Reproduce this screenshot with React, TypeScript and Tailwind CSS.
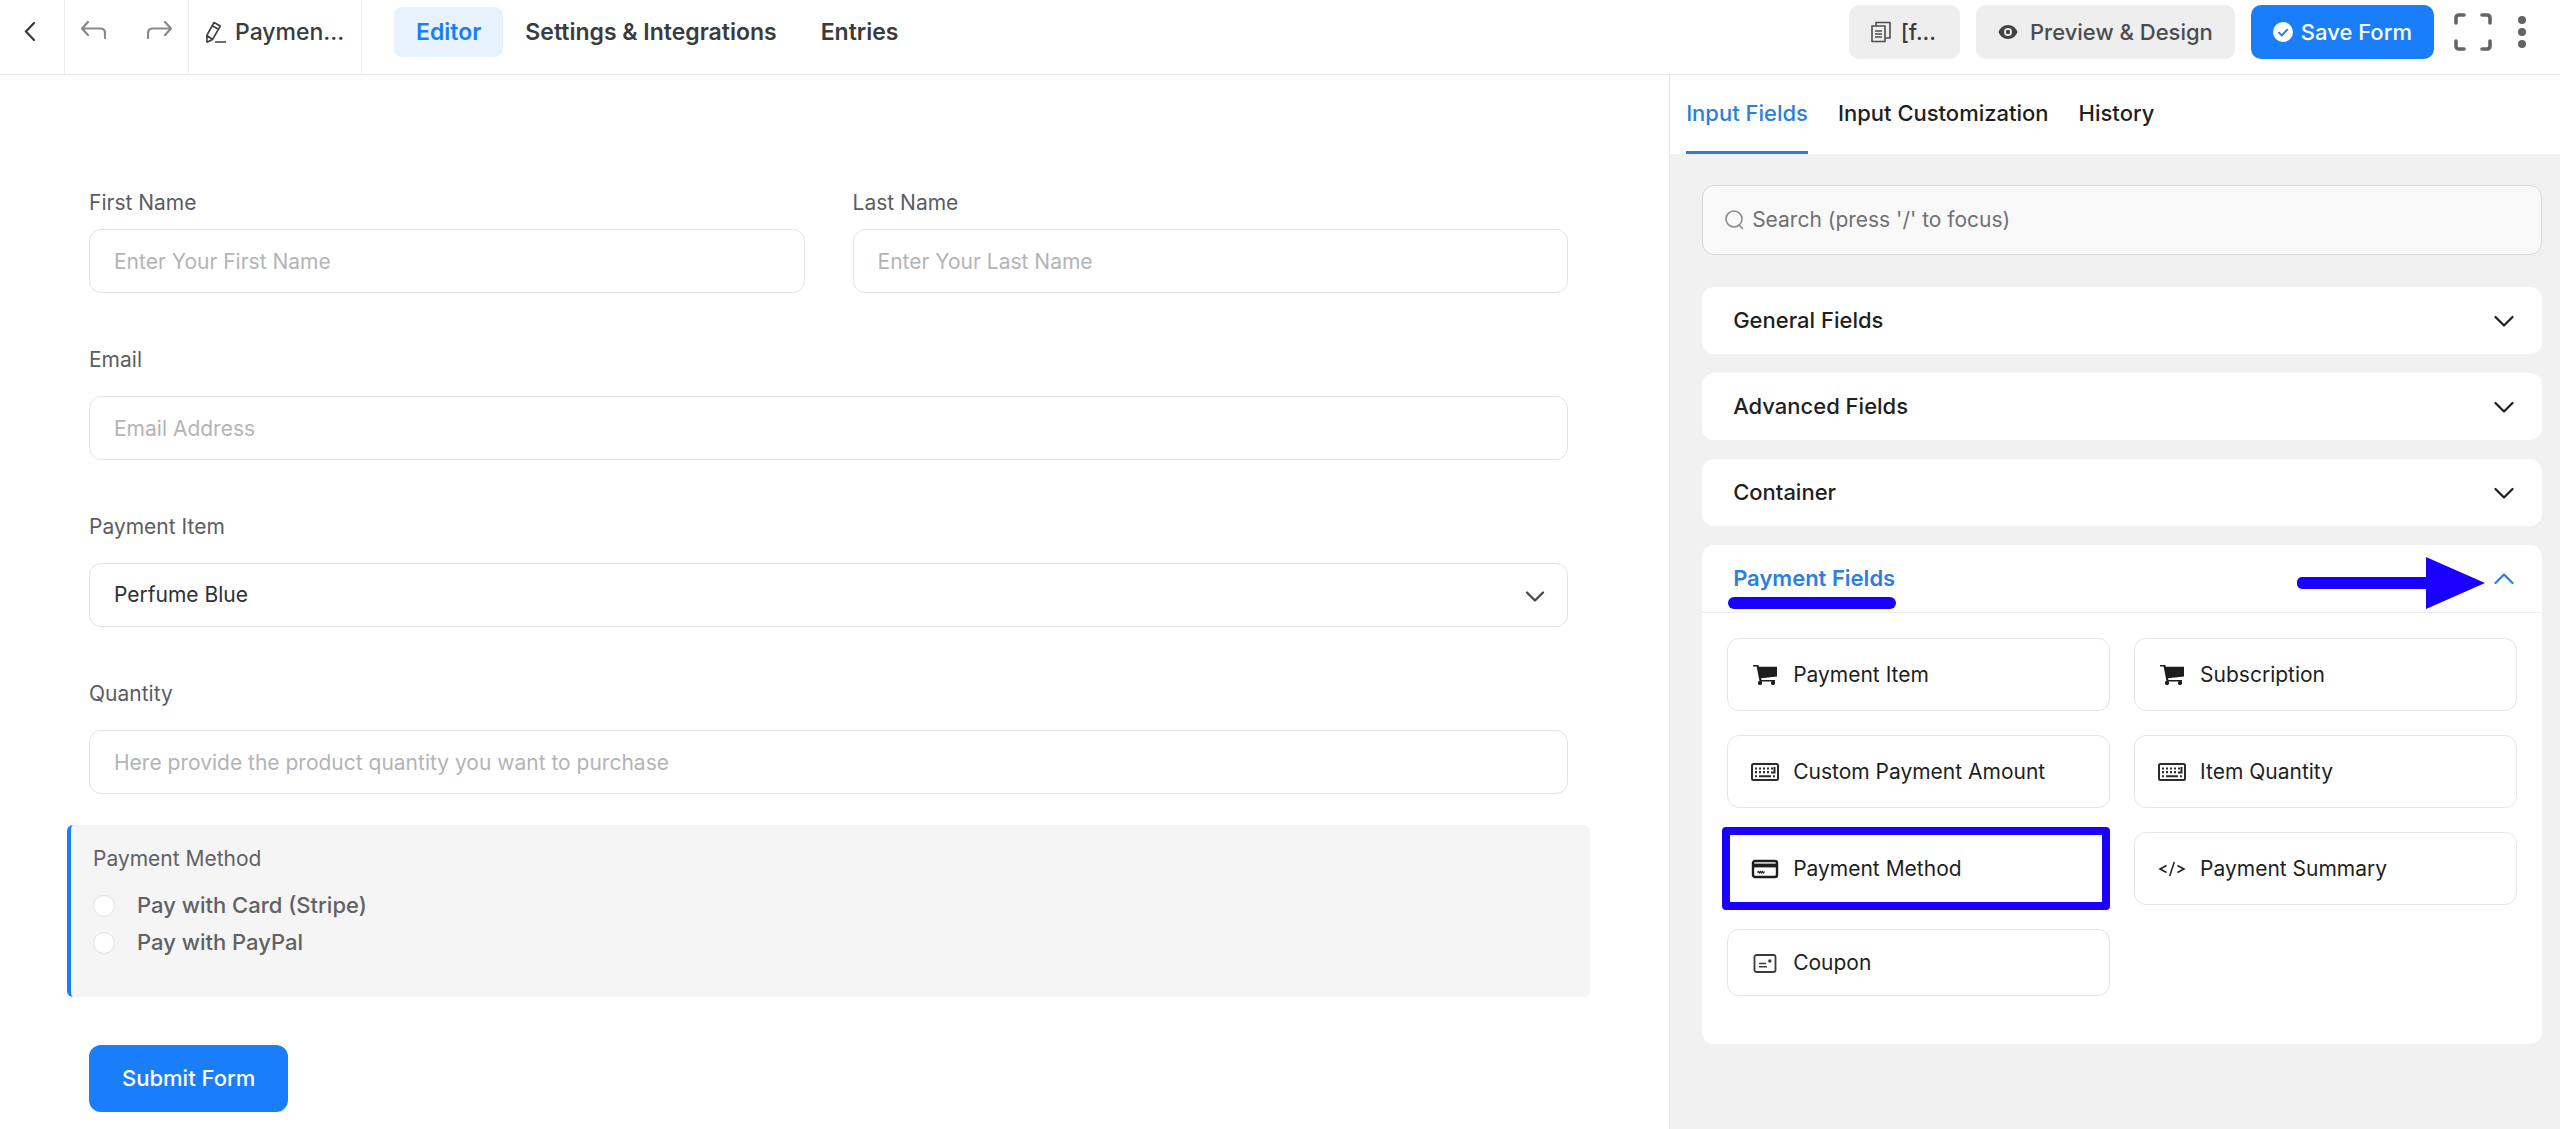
import React from "react";

const CartIcon = () => (
  <svg viewBox="0 0 28 24" className="h-6 w-7" fill="#1c1d1f" aria-hidden="true">
    <path d="M2 2h5.2l.7 1.8H26v9.6L10 15.2l.5 1.8H24v1.6H8.6L5.6 3.6H2z" />
    <rect x="7" y="18" width="4" height="4" rx="1.4" />
    <rect x="20" y="18" width="4" height="4" rx="1.4" />
  </svg>
);

const KeyboardIcon = () => (
  <svg viewBox="0 0 28 24" className="h-6 w-7" fill="none" stroke="#2a2b2d" aria-hidden="true">
    <rect x="1" y="4" width="26" height="16" rx="1.5" strokeWidth="2" />
    <path d="M4 8.5h18" strokeWidth="2.2" strokeDasharray="2 2" />
    <path d="M4 12.2h15" strokeWidth="2.2" strokeDasharray="2 2" />
    <path d="M23.5 7v5.5H20" strokeWidth="2" />
    <path d="M4 16.2h2M8 16.2h12M22 16.2h2" strokeWidth="2" />
  </svg>
);

const CardIcon = () => (
  <svg viewBox="0 0 28 24" className="h-6 w-7" fill="none" stroke="#1c1d1f" aria-hidden="true">
    <rect x="2" y="4" width="24" height="16" rx="2" strokeWidth="2.4" />
    <path d="M2 8.5h24" strokeWidth="3.8" />
    <path d="M6.5 15.5l1-1 1 1.4 1-1.4 1 1.4 1-1.4 1 1.4 1-1.4" strokeWidth="1.2" />
  </svg>
);

const CodeIcon = () => (
  <svg viewBox="0 0 28 24" className="h-6 w-7" fill="none" stroke="#1c1d1f" strokeWidth="1.5" aria-hidden="true">
    <path d="M8.5 8.5 2 12l6.5 3.5M19.5 8.5 26 12l-6.5 3.5M16.3 5l-4.6 14" />
  </svg>
);

const CouponIcon = () => (
  <svg viewBox="0 0 28 24" className="h-6 w-7" fill="none" stroke="#3a3b3d" strokeWidth="1.8" aria-hidden="true">
    <rect x="3.5" y="4" width="21" height="17" rx="2" />
    <path d="M8 12.5h7M8 15.8h8" strokeWidth="1.6" />
    <circle cx="18.8" cy="10" r="1.7" fill="#3a3b3d" stroke="none" />
  </svg>
);

const ChevronIcon = ({ up = false }: { up?: boolean }) => (
  <svg viewBox="0 0 20 20" className="size-5" fill="none" stroke="currentColor" strokeWidth="2.2" strokeLinecap="round" strokeLinejoin="round" aria-hidden="true">
    <path d={up ? "M1.5 14 10 5.5l8.5 8.5" : "M1.5 6 10 14.5 18.5 6"} />
  </svg>
);

const PencilIcon = () => (
  <svg viewBox="0 0 22 24" className="h-6 w-[22px]" fill="none" stroke="#3f4042" strokeWidth="1.6" strokeLinejoin="round" aria-hidden="true">
    <path d="M9 2.5 15.3 6 7.5 19.5 2 22.2 1.8 15.5zM7.2 5.8l6.2 3.5M1.8 15.5l5.7 4M10 22h11" />
  </svg>
);

const CopyDocIcon = () => (
  <svg viewBox="0 0 20 22" className="h-[22px] w-5" fill="none" stroke="#4b4c4e" strokeWidth="1.6" strokeLinejoin="round" aria-hidden="true">
    <path d="M1 5h13v15.5H1zM5 4.5V1.5h14V17h-4.5M4 10h7M4 13h7M4 16h7" />
  </svg>
);

const EyeIcon = () => (
  <svg viewBox="0 0 20 16" className="h-4 w-5" aria-hidden="true">
    <path d="M10 1C14.5 1 18 4 19.5 8 18 12 14.5 15 10 15S2 12 .5 8C2 4 5.5 1 10 1z" fill="#414244" />
    <circle cx="10" cy="8" r="4" fill="#eeeeee" />
    <circle cx="10" cy="8" r="2.2" fill="#414244" />
  </svg>
);

const CheckBadgeIcon = () => (
  <svg viewBox="0 0 20 20" className="size-5" aria-hidden="true">
    <circle cx="10" cy="10" r="10" fill="#ffffff" />
    <path d="m5.5 10.2 3.2 3.2 6-6.2" fill="none" stroke="#1a7efb" strokeWidth="1.8" />
  </svg>
);

const paymentFields = [
  { label: "Payment Item", Icon: CartIcon },
  { label: "Subscription", Icon: CartIcon },
  { label: "Custom Payment Amount", Icon: KeyboardIcon },
  { label: "Item Quantity", Icon: KeyboardIcon },
  { label: "Payment Method", Icon: CardIcon, marked: true },
  { label: "Payment Summary", Icon: CodeIcon },
  { label: "Coupon", Icon: CouponIcon },
];

const inputClass =
  "h-16 w-full rounded-xl border border-[#e2e2e4] bg-white px-6 text-[21px] text-[#2f3033] outline-none placeholder:text-[#b3b4b6]";

function Field({ id, label, near = false, children }: { id: string; label: string; near?: boolean; children: React.ReactNode }) {
  return (
    <div className={near ? "flex flex-col gap-2.5" : "flex flex-col gap-5"}>
      <label htmlFor={id} className="text-[21px] leading-8 text-[#5c5d60]">
        {label}
      </label>
      {children}
    </div>
  );
}

function TopBar() {
  return (
    <header className="flex h-[75px] border-b border-[#e9e9ea] text-[22px] font-medium text-[#3a3b3d]">
      <div className="flex w-[65px] items-center justify-center border-r border-[#ececed] pb-3">
        <button type="button" aria-label="Back" className="pr-1">
          <svg viewBox="0 0 12 20" className="h-5 w-3" fill="none" stroke="currentColor" strokeWidth="2.2" strokeLinecap="round">
            <path d="M10 2 2 10.5 10 19" />
          </svg>
        </button>
      </div>
      <div className="flex w-[124px] items-center justify-between border-r border-[#ececed] px-[15px] pb-3.5 text-[#88898b]">
        <button type="button" aria-label="Undo">
          <svg viewBox="0 0 26 20" className="h-5 w-[26px]" fill="none" stroke="currentColor" strokeWidth="2.2" strokeLinecap="round" strokeLinejoin="round">
            <path d="M8 2 2 8.5 8 15M2.5 8.5H20Q25 8.5 25 13V18" />
          </svg>
        </button>
        <button type="button" aria-label="Redo">
          <svg viewBox="0 0 26 20" className="h-5 w-[26px]" fill="none" stroke="currentColor" strokeWidth="2.2" strokeLinecap="round" strokeLinejoin="round">
            <path d="m18 2 6 6.5L18 15M23.5 8.5H6Q1 8.5 1 13V18" />
          </svg>
        </button>
      </div>
      <button type="button" className="flex w-[173px] items-center gap-2 border-r border-[#ececed] pb-2.5 pl-4 text-[23px]">
        <PencilIcon />
        Paymen...
      </button>
      <nav className="flex items-center pb-2.5 pl-8 text-[23px] font-semibold">
        <a href="#editor" className="flex h-[50px] items-center rounded-lg bg-[#e8f2ff] px-[22px] text-[#1a7efb]">Editor</a>
        <a href="#settings" className="px-[22px]">Settings &amp; Integrations</a>
        <a href="#entries" className="px-[22px]">Entries</a>
      </nav>
      <div className="ml-auto flex items-center gap-4 pr-[34px] pb-2.5">
        <button type="button" className="flex h-[54px] items-center gap-2.5 rounded-[10px] bg-[#eeeeee] pr-6 pl-[22px]">
          <CopyDocIcon />
          [f...
        </button>
        <button type="button" className="flex h-[54px] items-center gap-3 rounded-[10px] bg-[#eeeeee] px-[22px] text-[#4b4c4e]">
          <EyeIcon />
          Preview &amp; Design
        </button>
        <button type="button" className="flex h-[54px] items-center gap-2 rounded-[10px] bg-[#1a7efb] px-[22px] text-white">
          <CheckBadgeIcon />
          Save Form
        </button>
        <button type="button" aria-label="Full screen" className="ml-1">
          <svg viewBox="0 0 38 38" className="size-[38px]" fill="none" stroke="#636466" strokeWidth="3.6" strokeLinecap="round">
            <path d="M2 10V5Q2 2 5 2H10M28 2H33Q36 2 36 5V10M36 28V33Q36 36 33 36H28M10 36H5Q2 36 2 33V28" />
          </svg>
        </button>
        <button type="button" aria-label="More" className="ml-2.5">
          <svg viewBox="0 0 8 32" className="h-8 w-2" fill="#636466">
            <circle cx="4" cy="4" r="4" />
            <circle cx="4" cy="16" r="4" />
            <circle cx="4" cy="28" r="4" />
          </svg>
        </button>
      </div>
    </header>
  );
}

function FormCanvas() {
  return (
    <main className="min-w-0 flex-1 pt-28 pr-[101px] pl-[89px]">
      <form>
        <div className="flex flex-col gap-[51px]">
          <div className="grid grid-cols-2 gap-12">
            <Field id="first" label="First Name" near>
              <input id="first" className={inputClass} placeholder="Enter Your First Name" />
            </Field>
            <Field id="last" label="Last Name" near>
              <input id="last" className={inputClass} placeholder="Enter Your Last Name" />
            </Field>
          </div>
          <Field id="email" label="Email">
            <input id="email" type="email" className={inputClass} placeholder="Email Address" />
          </Field>
          <Field id="item" label="Payment Item">
            <div className="relative">
              <select id="item" className={inputClass + " appearance-none"}>
                <option>Perfume Blue</option>
              </select>
              <svg viewBox="0 0 20 20" className="pointer-events-none absolute top-[23px] right-[23px] size-5" fill="none" stroke="#4a4b4d" strokeWidth="2.4" strokeLinecap="round" strokeLinejoin="round" aria-hidden="true">
                <path d="m2 6.5 8 8 8-8" />
              </svg>
            </div>
          </Field>
          <Field id="qty" label="Quantity">
            <input id="qty" className={inputClass} placeholder="Here provide the product quantity you want to purchase" />
          </Field>
        </div>
        <fieldset className="mx-[-22px] mt-[31px] rounded-md border-l-4 border-[#1a7efb] bg-[#f5f5f5] px-[22px] pt-[18px] pb-9 text-[22px] text-[#606164]">
          <legend className="float-left mb-3 w-full text-[21px] leading-8">Payment Method</legend>
          {["Pay with Card (Stripe)", "Pay with PayPal"].map((option) => (
            <label key={option} className="clear-both flex h-[37px] items-center gap-[22px] font-medium">
              <input type="radio" name="method" className="size-[22px] appearance-none rounded-full border border-[#e2e2e4] bg-white checked:border-[7px] checked:border-[#1a7efb]" />
              {option}
            </label>
          ))}
        </fieldset>
        <button type="submit" className="mt-12 h-[67px] rounded-xl bg-[#1a7efb] px-[33px] text-[22px] font-medium text-white">
          Submit Form
        </button>
      </form>
    </main>
  );
}

function Sidebar() {
  return (
    <aside className="w-[34.8%] shrink-0 border-l border-[#e6e6e7] bg-[#f1f1f1] text-[22px] text-[#1e1f21]">
      <div role="tablist" className="flex h-[79px] gap-[30px] bg-white pl-4 font-medium">
        <button type="button" role="tab" aria-selected="true" className="border-b-3 border-[#2c7fdc] text-[#2c7fdc]">Input Fields</button>
        <button type="button" role="tab" className="border-b-3 border-transparent">Input Customization</button>
        <button type="button" role="tab" className="border-b-3 border-transparent">History</button>
      </div>
      <div className="pt-[31px] pr-[18px] pb-8 pl-8">
        <label className="flex h-[70px] items-center gap-2 rounded-xl border border-[#d6d7d9] bg-[#f9f9f9] px-[21px]">
          <svg viewBox="0 0 20 20" className="size-5 shrink-0" fill="none" stroke="#8a8b8d" strokeWidth="1.6" strokeLinecap="round" aria-hidden="true">
            <circle cx="10" cy="9" r="8" />
            <path d="m15.5 15.5 3 3" />
          </svg>
          <input type="search" aria-label="Search fields" placeholder="Search (press '/' to focus)" className="min-w-0 flex-1 bg-transparent text-[21px] outline-none placeholder:text-[#6f7073]" />
        </label>
        <div className="mt-8 flex flex-col gap-[19px]">
          {["General Fields", "Advanced Fields", "Container"].map((title) => (
            <button key={title} type="button" className="flex h-[67px] items-center justify-between rounded-xl bg-white pr-7 pl-[31px] font-medium">
              {title}
              <ChevronIcon />
            </button>
          ))}
          <section className="relative rounded-xl bg-white">
            <button type="button" aria-expanded="true" className="flex h-[68px] w-full items-center justify-between border-b border-[#ececed] pr-7 pl-[31px] font-semibold text-[#2c7fdc]">
              Payment Fields
              <ChevronIcon up />
            </button>
            <span className="absolute top-[52px] left-[26px] h-3 w-[168px] rounded-full bg-[#1900ff]" />
            <svg viewBox="0 0 188 52" className="absolute top-3 right-[57px] h-[52px] w-[188px]" fill="#1900ff" aria-hidden="true">
              <rect x="0" y="20" width="140" height="12" rx="5" />
              <path d="M129 0 188 26 129 52z" />
            </svg>
            <div className="grid grid-cols-2 gap-6 px-[25px] pt-[25px] pb-12 text-[21px]">
              {paymentFields.map(({ label, Icon, marked }) => (
                <button
                  key={label}
                  type="button"
                  className="relative flex h-[73px] items-center gap-3.5 rounded-xl border border-[#e5e5e7] bg-white pl-[23px] text-left last:h-[67px]"
                >
                  <Icon />
                  {label}
                  {marked && <span className="absolute -top-1.5 -right-px -bottom-1.5 -left-1.5 rounded border-8 border-[#1900ff]" />}
                </button>
              ))}
            </div>
          </section>
        </div>
      </div>
    </aside>
  );
}

export default function App() {
  return (
    <div className="flex min-h-screen flex-col bg-white font-['Inter',sans-serif]">
      <TopBar />
      <div className="flex flex-1">
        <FormCanvas />
        <Sidebar />
      </div>
    </div>
  );
}
